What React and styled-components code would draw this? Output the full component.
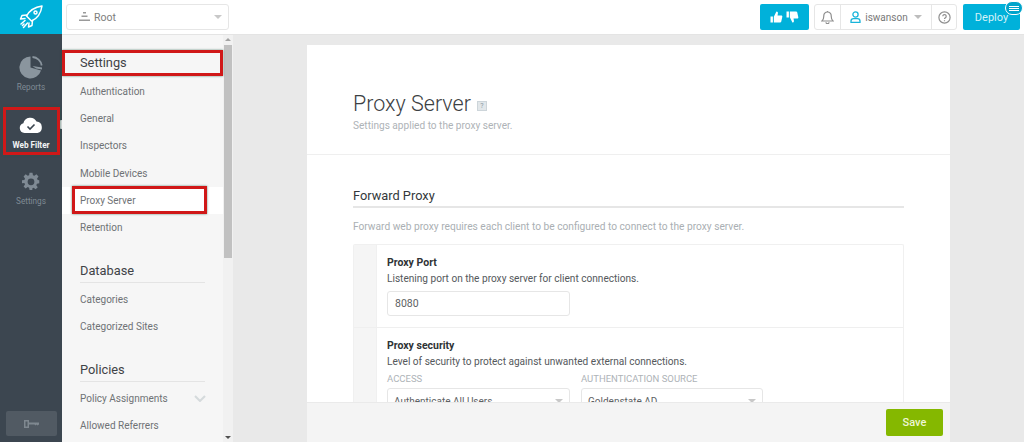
import React from 'react';
import styled, { createGlobalStyle } from 'styled-components';

const Global = createGlobalStyle`
  html, body { margin: 0; padding: 0; height: 442px; overflow: hidden; background: #e9e9e9; }
  body { font-family: Roboto, "Liberation Sans", sans-serif; }
  * { box-sizing: border-box; }
`;
const Page = styled.div`display: flex; width: 1024px; height: 442px; overflow: hidden;`;
const Rail = styled.nav`width: 62px; flex: none; background: #3c4650; display: flex; flex-direction: column; align-items: center;`;
const Logo = styled.div`width: 62px; height: 34px; background: #00b1da; display: flex; align-items: center; justify-content: center;`;
const RailItem = styled.div`
  position: relative; width: 56px; height: 47px; margin-top: ${p => p.$mt}px; padding-top: ${p => p.$pt}px; display: flex; flex-direction: column; align-items: center; justify-content: flex-start;
  color: ${p => p.$active ? '#f2f4f5' : '#7f8a94'}; font-size: 8.2px; line-height: 10px; font-weight: ${p => p.$active ? 700 : 400}; gap: ${p => p.$gap}px; flex: none;
`;
const RailSpacer = styled.div`flex: 1;`;
const KeyBtn = styled.div`width: 51px; height: 25px; margin-bottom: 6px; border-radius: 2px; background: #515a63; display: flex; align-items: center; justify-content: center;`;
const Notch = styled.span`position: absolute; right: -3px; top: 13px; width: 4px; height: 9px; background: #d9dcdc; border-radius: 4px 0 0 4px;`;
const RedBox = styled.span`position: absolute; border: 3px solid #d01818; pointer-events: none; box-shadow: 0 0 2px rgba(30,90,70,.7); left: ${p => p.$l}px; top: ${p => p.$t}px; width: ${p => p.$w}px; height: ${p => p.$h}px;`;
const Body = styled.div`flex: 1; display: flex; flex-direction: column; min-width: 0;`;
const TopBar = styled.header`height: 35px; flex: none; background: #fff; border-bottom: 1px solid #e4e4e4; display: flex; align-items: flex-start; padding: 4px 4px 0 4px;`;
const RootSelect = styled.div`width: 163px; height: 26px; border: 1px solid #e6e6e6; border-radius: 3px; display: flex; align-items: center; padding: 0 6px 0 12px; color: #7d7d7d; font-size: 10.5px; gap: 4px;`;
const Caret = styled.span`width: 0; height: 0; border-left: 4px solid transparent; border-right: 4px solid transparent; border-top: 4px solid ${p => p.$c || '#c8c8c8'}; margin-left: ${p => p.$ml ? `${p.$ml}px` : 'auto'}; flex: none;`;
const TopGap = styled.div`flex: 1;`;
const FeedbackBtn = styled.div`width: 49px; height: 26px; margin-right: 5px; border-radius: 2px; background: #00b1da; display: flex; align-items: center; justify-content: center; gap: 3px;`;
const UserGroup = styled.div`display: flex; height: 26px; border: 1px solid #e6e6e6; border-radius: 3px;`;
const GroupCell = styled.div`display: flex; align-items: center; justify-content: center; width: ${p => p.$w}px; border-left: ${p => p.$first ? 'none' : '1px solid #e6e6e6'}; gap: 4px; color: #777; font-size: 10px;`;
const DeployBtn = styled.div`position: relative; width: 57px; height: 26px; margin-left: 6px; border-radius: 2px; background: #00b1da; color: #d4f1f8; font-size: 11px; display: flex; align-items: center; justify-content: center;`;
const DeployBadge = styled.span`position: absolute; right: -3px; top: -3px; width: 18px; height: 14px; border-radius: 7px; background: #00a4cb; border: 1px solid #fff; display: flex; flex-direction: column; align-items: center; justify-content: center; gap: 1px; i { display:block; width: 10px; height: 1px; background: #fff; }`;
const Under = styled.div`flex: 1; display: flex; min-height: 0; position: relative;`;
const SideWrap = styled.div`width: 171px; flex: none; display: flex; background: #f6f6f6;`;
const Side = styled.aside`width: 161px; padding: 0 0 0 18px; overflow: hidden; background: #f6f6f6;`;
const SideHead = styled.div`margin: ${p => p.$mt}px 18px ${p => p.$line ? 3 : 0}px 0; height: ${p => p.$h}px; font-size: 12.8px; color: #3f4347; border-bottom: ${p => p.$line ? '1px solid #e4e4e4' : 'none'}; display: flex; align-items: ${p => p.$line ? 'flex-start' : 'center'};`;
const SideItem = styled.div`height: 27.2px; margin-left: -18px; padding-left: 18px; padding-right: 17px; font-size: 10px; color: #6f7275; display: flex; align-items: center; justify-content: space-between; background: ${p => p.$active ? '#fff' : 'transparent'};`;
const Scroll = styled.div`width: 10px; position: relative; background: #f1f1f1; display: flex; flex-direction: column; align-items: center; justify-content: space-between; padding: 3px 0;`;
const Thumb = styled.div`position: absolute; left: 1px; top: 10px; width: 8px; height: 213px; background: #c1c1c1;`;
const Arrow = styled.span`width: 0; height: 0; border-left: 3px solid transparent; border-right: 3px solid transparent; ${p => p.$up ? 'border-bottom: 3px solid #a3a3a3;' : 'border-top: 3px solid #505050;'}`;
const Main = styled.main`flex: 1; min-width: 0; padding: 10px 74px 0 74px; background: #e9e9e9; display: flex;`;
const Card = styled.section`width: 643px; height: 100%; background: #fff; display: flex; flex-direction: column;`;
const CardScroll = styled.div`flex: 1; min-height: 0; overflow: hidden;`;
const CardHead = styled.div`height: 110px; padding: 45px 46px 0; border-bottom: 1px solid #efefef;`;
const Title = styled.h1`margin: 0; font-size: 21.5px; line-height: 28px; font-weight: 300; color: #3c4043; display: flex; align-items: center; gap: 6px;`;
const HelpBox = styled.span`width: 10px; height: 10px; margin-top: 3px; background: #e2e7ea; border: 1px solid #cdd5da; color: #8b9aa3; font-size: 7px; font-weight: 400; display: flex; align-items: center; justify-content: center;`;
const Sub = styled.p`margin: 1px 0 0; font-size: 10.1px; line-height: 14px; color: #aeb3b7;`;
const Section = styled.div`padding: 30px 46px 0;`;
const H2 = styled.h2`margin: 0; height: 23px; font-size: 12.8px; font-weight: 400; line-height: 22px; color: #34383b; border-bottom: 2px solid #e6e6e6;`;
const Note = styled.p`margin: 12px 0 0; font-size: 10.2px; line-height: 14px; color: #aaafb3;`;
const Panel = styled.div`margin-top: 10px; border: 1px solid #f0f0f0; border-bottom: none; border-radius: 2px 2px 0 0;`;
const Row = styled.div`display: flex; height: ${p => p.$h}px; border-bottom: 1px solid #efefef;`;
const Gutter = styled.div`width: 23px; flex: none; background: #f5f5f5; border-right: 1px solid #f0f0f0;`;
const RowBody = styled.div`flex: 1; padding: 11px 0 0 10px;`;
const Label = styled.div`font-size: 10.5px; font-weight: 700; line-height: 14px; color: #2f3336;`;
const Desc = styled.div`margin-top: 2px; font-size: 10.1px; line-height: 14px; color: #55595c;`;
const Input = styled.div`margin-top: 5px; width: 183px; height: 25px; border: 1px solid #e6e6e6; border-radius: 3px; padding-left: 7px; font-size: 10.5px; color: #5d6163; display: flex; align-items: center;`;
const Fields = styled.div`display: flex; gap: 11px; margin-top: 3px;`;
const Field = styled.div`width: ${p => p.$w}px;`;
const FieldLabel = styled.div`font-size: 9.5px; line-height: 13px; color: #aeb3b7; text-transform: uppercase;`;
const SelectBox = styled.div`margin-top: 3px; height: 25px; border: 1px solid #e6e6e6; border-radius: 3px; padding: 1px 6px 0; font-size: 10px; color: #5d6163; display: flex; align-items: center;`;
const Footer = styled.footer`height: 40px; flex: none; background: #f4f4f4; border-top: 1px solid #eaeaea; display: flex; align-items: center; justify-content: flex-end; padding: 0 7px 0 0;`;
const Save = styled.div`width: 57px; height: 27px; border-radius: 2px; background: #85b800; color: #eef6d6; font-size: 11px; font-weight: 500; display: flex; align-items: center; justify-content: center;`;

const Rocket = () => (
  <svg width="24" height="24" viewBox="0 0 24 24" fill="none" stroke="#fff" strokeWidth="1.5" strokeLinejoin="round" strokeLinecap="round">
    <path d="M23 1 C16 2 10.5 5.5 7.5 11 L12.5 16 C18.5 13.5 22 8 23 1Z" />
    <path d="M8 10 L3 10.5 L1.5 14 L6 13.5 M13.5 15.5 L13 20.5 L9.5 22 L10 18" />
    <circle cx="16.5" cy="7.5" r="1.5" />
    <path d="M6 15.5 L2 19 M8.5 18 L4.5 22.5 M5 19 L3.5 20.5" />
  </svg>
);
const Pie = () => (
  <svg width="24" height="25" viewBox="0 0 24 25">
    <path fill="#8a959e" d="M11.5 1.5 A11 11 0 1 0 22 15.5 L11.5 12.5Z" />
    <path fill="none" stroke="#8a959e" strokeWidth="1.8" d="M13.5 2 A10 10 0 0 1 22.7 10.5" />
    <path fill="#8a959e" d="M13.5 11 L23 12.5 L23 14.5 L17 13.5Z" />
  </svg>
);
const Cloud = () => (
  <svg width="24" height="17" viewBox="0 0 24 17">
    <path fill="#fff" d="M5.5 17 A5 5 0 0 1 4.4 7.2 A7 7 0 0 1 17.5 5.6 A5.8 5.8 0 0 1 18.5 17Z" />
    <path fill="none" stroke="#3c4650" strokeWidth="1.6" d="M8.5 10.5 L11 13 L15.5 8.5" />
  </svg>
);
const Gear = () => (
  <svg width="18" height="18" viewBox="0 0 24 24" fill="#7f8a94">
    <path fillRule="evenodd" d="M10 1h4l.6 3.2 1.9.8 2.700-1.900 2.800 2.800-1.900 2.700.8 1.900L23 11v4l-3.100.6-.8 1.900 1.900 2.700-2.800 2.800-2.700-1.900-1.900.8L13.900 24h-3.800l-.6-3.100-1.900-.8-2.700 1.900-2.800-2.800 1.900-2.700-.8-1.900L0 15v-4l3.200-.5.8-1.900L2.100 5.900l2.800-2.800 2.700 1.900 1.900-.8zM12 8.500a4.500 4.500 0 1 0 0 9 4.500 4.500 0 0 0 0-9z" />
  </svg>
);
const KeyIcon = () => (
  <svg width="15" height="8" viewBox="0 0 15 8" fill="#7f8890">
    <path d="M0 0h5v2.500h10v2l-1.500 1-1-1-1 1-1-1H5V8H0zM1.500 1.500v5h2v-5z" fillRule="evenodd" />
  </svg>
);
const RootIcon = () => (
  <svg width="11" height="10" viewBox="0 0 11 10" fill="#9a9a9a">
    <rect x="4" y="0" width="3" height="1.5" /><rect x="2.5" y="3.5" width="6" height="1.5" /><rect x="0" y="7.5" width="11" height="1.5" />
  </svg>
);
const ThumbIcon = ({ $down }) => (
  <svg width="13" height="12" viewBox="0 0 13 13" fill="#fff">
    <g transform={$down ? 'translate(0 13) scale(1 -1)' : undefined}>
      <path d="M0 6h2.600v6.500H0zM3.600 6.200 6.400.6c1.300 0 1.900.9 1.600 2.200L7.600 4.800h4c.9 0 1.400.7 1.200 1.500l-1.200 5.300c-.2.600-.6.900-1.200.9H3.600z" />
    </g>
  </svg>
);
const Bell = () => (
  <svg width="13" height="14" viewBox="0 0 13 14" fill="none" stroke="#8f8f8f" strokeWidth="1.2">
    <path d="M1 11h11c-1.300-1.200-1.800-2.500-1.800-5A3.700 3.700 0 0 0 6.500 2 3.700 3.700 0 0 0 2.800 6c0 2.500-.5 3.800-1.800 5z" />
    <path d="M5 12.200a1.500 1.500 0 0 0 3 0M6.500 1v1" />
  </svg>
);
const User = () => (
  <svg width="11" height="12" viewBox="0 0 11 12" fill="none" stroke="#18b4da" strokeWidth="1.3">
    <circle cx="5.5" cy="3.5" r="2.6" /><path d="M1 11.300V10c0-1.500 1.200-2.300 2.500-2.300h4c1.300 0 2.500.8 2.500 2.300v1.300z" />
  </svg>
);
const Help = () => (
  <svg width="13" height="13" viewBox="0 0 13 13" fill="none" stroke="#8f8f8f" strokeWidth="1.2">
    <circle cx="6.5" cy="6.5" r="5.6" /><path d="M4.800 5.200a1.700 1.700 0 1 1 2.600 1.500c-.6.400-.9.700-.9 1.400M6.500 9.200v1" />
  </svg>
);
const Chevron = () => (
  <svg width="12" height="7" viewBox="0 0 12 7" fill="none" stroke="#d5dadc" strokeWidth="2"><path d="M1 1l5 5 5-5" /></svg>
);

export default function App() {
  return (
    <Page>
      <Global />
      <Rail>
        <Logo><Rocket /></Logo>
        <RailItem $mt={16} $pt={5} $gap={2}><Pie /><span>Reports</span></RailItem>
        <RailItem $mt={10} $pt={9} $gap={7} $active><Cloud /><span>Web Filter</span><Notch /><RedBox $l={0} $t={0} $w={57} $h={48} /></RailItem>
        <RailItem $mt={8} $pt={10} $gap={6}><Gear /><span>Settings</span></RailItem>
        <RailSpacer />
        <KeyBtn><KeyIcon /></KeyBtn>
      </Rail>
      <Body>
        <TopBar>
          <RootSelect><RootIcon />Root<Caret /></RootSelect>
          <TopGap />
          <FeedbackBtn><ThumbIcon /><ThumbIcon $down /></FeedbackBtn>
          <UserGroup>
            <GroupCell $w={25} $first><Bell /></GroupCell>
            <GroupCell $w={91}><User />iswanson<Caret $c="#bdbdbd" $ml={2} /></GroupCell>
            <GroupCell $w={25}><Help /></GroupCell>
          </UserGroup>
          <DeployBtn>Deploy<DeployBadge><i /><i /><i /></DeployBadge></DeployBtn>
        </TopBar>
        <Under>
          <SideWrap>
            <Side>
              <SideHead $mt={12} $h={31}>Settings</SideHead>
              <SideItem>Authentication</SideItem>
              <SideItem>General</SideItem>
              <SideItem>Inspectors</SideItem>
              <SideItem>Mobile Devices</SideItem>
              <SideItem $active>Proxy Server</SideItem>
              <SideItem>Retention</SideItem>
              <SideHead $mt={22} $h={20} $line>Database</SideHead>
              <SideItem>Categories</SideItem>
              <SideItem>Categorized Sites</SideItem>
              <SideHead $mt={21} $h={20} $line>Policies</SideHead>
              <SideItem>Policy Assignments<Chevron /></SideItem>
              <SideItem>Allowed Referrers</SideItem>
            </Side>
            <Scroll><Thumb /><Arrow $up /><Arrow /></Scroll>
          </SideWrap>
          <RedBox $l={0} $t={15} $w={161} $h={26} />
          <RedBox $l={10} $t={151} $w={135} $h={28} />
          <Main>
            <Card>
              <CardScroll>
                <CardHead>
                  <Title>Proxy Server <HelpBox>?</HelpBox></Title>
                  <Sub>Settings applied to the proxy server.</Sub>
                </CardHead>
                <Section>
                  <H2>Forward Proxy</H2>
                  <Note>Forward web proxy requires each client to be configured to connect to the proxy server.</Note>
                  <Panel>
                    <Row $h={83}>
                      <Gutter />
                      <RowBody>
                        <Label>Proxy Port</Label>
                        <Desc>Listening port on the proxy server for client connections.</Desc>
                        <Input>8080</Input>
                      </RowBody>
                    </Row>
                    <Row $h={100}>
                      <Gutter />
                      <RowBody>
                        <Label>Proxy security</Label>
                        <Desc>Level of security to protect against unwanted external connections.</Desc>
                        <Fields>
                          <Field $w={183}><FieldLabel>Access</FieldLabel><SelectBox>Authenticate All Users<Caret /></SelectBox></Field>
                          <Field $w={182}><FieldLabel>Authentication Source</FieldLabel><SelectBox>Goldenstate AD<Caret /></SelectBox></Field>
                        </Fields>
                      </RowBody>
                    </Row>
                  </Panel>
                </Section>
              </CardScroll>
              <Footer><Save>Save</Save></Footer>
            </Card>
          </Main>
        </Under>
      </Body>
    </Page>
  );
}
